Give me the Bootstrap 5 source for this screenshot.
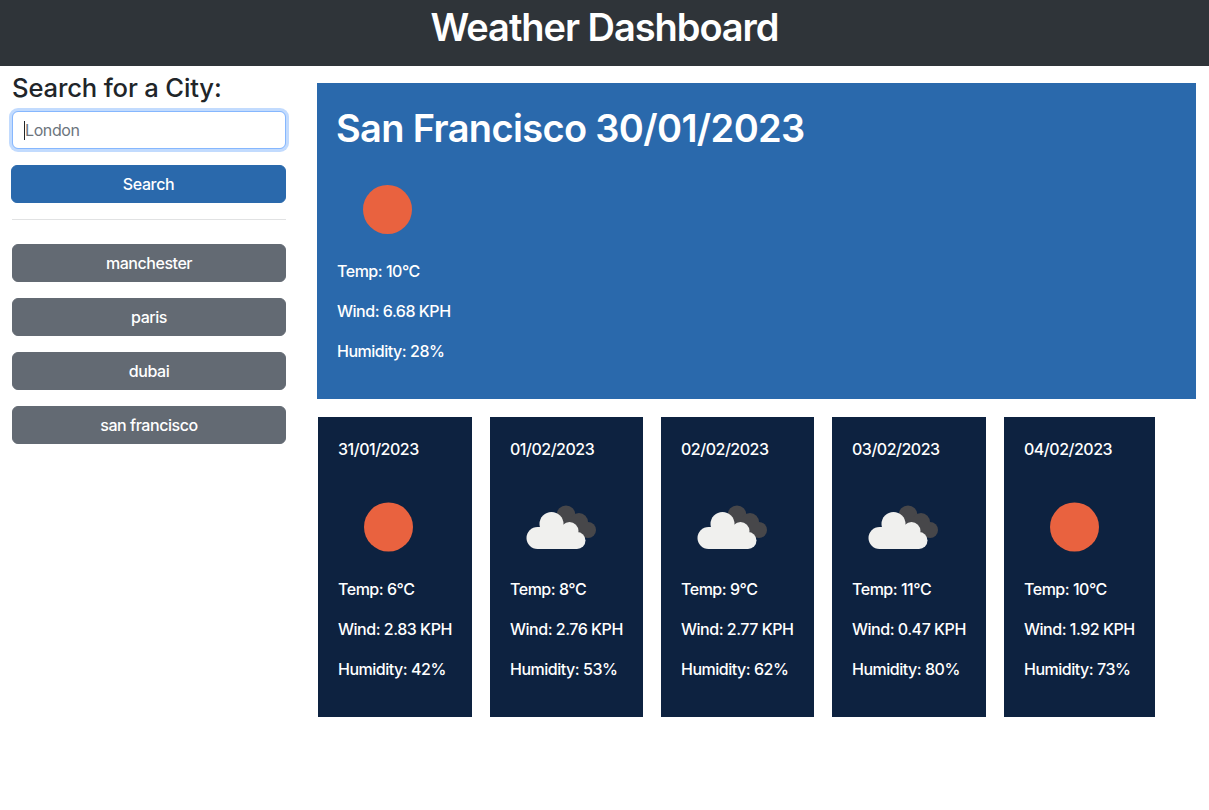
<!DOCTYPE html>
<html lang="en">
<head>
<meta charset="utf-8">
<title>Weather Dashboard</title>
<link href="https://cdn.jsdelivr.net/npm/bootstrap@5.3.0/dist/css/bootstrap.min.css" rel="stylesheet">
<style>
body{font-family:Inter,"Liberation Sans",sans-serif;font-size:16px;color:#212529;background:#fff;height:810px;overflow:hidden}
.wx-head{background:#2f3439;height:66px;color:#fff}
.wx-head h1{font-size:38px;font-weight:600;line-height:54px;margin:0;letter-spacing:-1.05px}
.wx-side{width:298px;flex:none;padding:7px 12px 0 12px}
.wx-side h2{font-size:25.6px;font-weight:500;line-height:30px;margin:0 0 8px;letter-spacing:-.15px}
.wx-field{width:274px}
.wx-input{height:38px;border-color:#86b7fe;box-shadow:0 0 0 3px rgba(13,110,253,.25);font-size:16px;padding:6px 12px;color:#212529;letter-spacing:-.4px}
.wx-input::placeholder{color:#6c757d}
.wx-caret{position:absolute;left:12px;top:10px;width:1px;height:19px;background:#212529}
.wx-blue{background:#2a69ac;border-color:#2a69ac;color:#fff;margin-left:-1px;width:275px;height:38px;font-size:16px;font-weight:500;margin-top:16px;letter-spacing:-.35px}
.wx-rule{margin:16px 0 24px;width:274px;border-top:1px solid #e1e2e3;opacity:1}
.wx-gray{background:#636a73;border-color:#636a73;color:#fff;width:274px;height:38px;font-size:16px;font-weight:500;letter-spacing:-.45px}
.wx-main{padding:17px 0 0 19px;width:899px}
.wx-today{background:#2a69ac;color:#fff;height:316px;padding:20px;width:879px}
.wx-today h2{font-size:38px;font-weight:600;line-height:50px;margin:0 0 6px -1px;letter-spacing:-.65px}
.wx-icon{display:block;width:100px;height:100px}
.wx-today p,.wx-day p{margin:0 0 16px;line-height:24px;font-size:16px;font-weight:500;letter-spacing:-.48px;white-space:nowrap}
.wx-days{margin-top:18px;margin-left:1px;gap:18px}
.wx-day{background:#0d2240;color:#fff;width:153px;height:300px;padding:20px 0 20px 20px}
.wx-day-wide{width:154px}
.wx-day-last{width:151px}
.wx-day .wx-date{margin-bottom:0}
.wx-day .wx-icon{margin:16px 0 0}
</style>
</head>
<body>
<header class="wx-head text-center"><h1>Weather Dashboard</h1></header>
<div class="d-flex">
  <aside class="wx-side">
    <h2>Search for a City:</h2>
    <div class="wx-field position-relative">
      <input class="form-control wx-input" type="text" placeholder="London" aria-label="City">
      <span class="wx-caret"></span>
    </div>
    <button class="btn wx-blue d-block" type="button">Search</button>
    <hr class="wx-rule">
    <div class="d-flex flex-column gap-3">
      <button class="btn wx-gray" type="button">manchester</button>
      <button class="btn wx-gray" type="button">paris</button>
      <button class="btn wx-gray" type="button">dubai</button>
      <button class="btn wx-gray" type="button">san francisco</button>
    </div>
  </aside>
  <main class="wx-main">
    <section class="wx-today">
      <h2>San Francisco 30/01/2023</h2>
      <svg class="wx-icon" viewBox="0 0 100 100" aria-hidden="true"><circle cx="50.500" cy="50.500" r="24.500" fill="#e9623f"/></svg>
      <p>Temp: 10°C</p>
      <p>Wind: 6.68 KPH</p>
      <p>Humidity: 28%</p>
    </section>
    <div class="d-flex wx-days">
      <article class="wx-day wx-day-wide">
        <p class="wx-date">31/01/2023</p>
        <svg class="wx-icon" viewBox="0 0 100 100" aria-hidden="true"><circle cx="50.500" cy="50" r="24.500" fill="#e9623f"/></svg>
        <p>Temp: 6°C</p><p>Wind: 2.83 KPH</p><p>Humidity: 42%</p>
      </article>
      <article class="wx-day">
        <p class="wx-date">01/02/2023</p>
        <svg class="wx-icon" viewBox="0 0 100 100" aria-hidden="true"><use href="#wx-cloud"/></svg>
        <p>Temp: 8°C</p><p>Wind: 2.76 KPH</p><p>Humidity: 53%</p>
      </article>
      <article class="wx-day">
        <p class="wx-date">02/02/2023</p>
        <svg class="wx-icon" viewBox="0 0 100 100" aria-hidden="true"><use href="#wx-cloud"/></svg>
        <p>Temp: 9°C</p><p>Wind: 2.77 KPH</p><p>Humidity: 62%</p>
      </article>
      <article class="wx-day wx-day-wide">
        <p class="wx-date">03/02/2023</p>
        <svg class="wx-icon" viewBox="0 0 100 100" aria-hidden="true"><use href="#wx-cloud"/></svg>
        <p>Temp: 11°C</p><p>Wind: 0.47 KPH</p><p>Humidity: 80%</p>
      </article>
      <article class="wx-day wx-day-last">
        <p class="wx-date">04/02/2023</p>
        <svg class="wx-icon" viewBox="0 0 100 100" aria-hidden="true"><circle cx="50.500" cy="50" r="24.500" fill="#e9623f"/></svg>
        <p>Temp: 10°C</p><p>Wind: 1.92 KPH</p><p>Humidity: 73%</p>
      </article>
    </div>
  </main>
</div>
<svg width="0" height="0" class="position-absolute" aria-hidden="true">
  <symbol id="wx-cloud" viewBox="0 0 100 100">
    <g fill="#47474a"><circle cx="56" cy="38" r="9.500"/><circle cx="69" cy="45" r="9"/><circle cx="78" cy="53" r="8"/><rect x="52" y="40" width="24" height="18"/></g>
    <g fill="#f0f0ee"><circle cx="41.500" cy="47" r="12"/><circle cx="27.500" cy="61" r="11"/><circle cx="59.500" cy="54" r="9"/><circle cx="67" cy="63.500" r="8.500"/><rect x="27.500" y="50" width="39.500" height="22"/></g>
  </symbol>
</svg>
<script src="https://cdn.jsdelivr.net/npm/bootstrap@5.3.0/dist/js/bootstrap.bundle.min.js"></script>
</body>
</html>
